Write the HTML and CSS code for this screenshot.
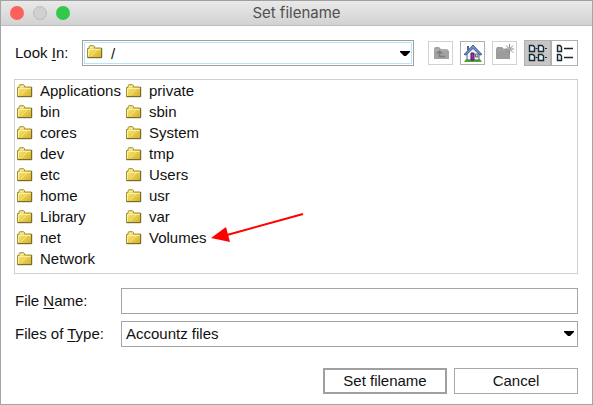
FILE: index.html
```html
<!DOCTYPE html>
<html lang="en">
<head>
<meta charset="utf-8">
<title>Set filename</title>
<link rel="stylesheet" href="styles.css">
</head>
<body>
<svg class="defs" aria-hidden="true">
  <defs>
    <linearGradient id="gold" x1="0" y1="0" x2="1" y2="1">
      <stop offset="0" stop-color="#f8ee98"/>
      <stop offset=".5" stop-color="#ecd050"/>
      <stop offset="1" stop-color="#d4ae2c"/>
    </linearGradient>
    <symbol id="folder" viewBox="0 0 16 14">
      <path d="M.5 12.500V3.500H2V1.500L3 .7H6.500L7.500 1.500V3H14.500V12.500Z" fill="url(#gold)" stroke="#a09034"/>
      <path d="M1.500 11.500V4.500H13.500" fill="none" stroke="#fbf0a0"/>
      <path d="M3 2.500H6.500" stroke="#f8ec98"/>
      <path d="M4 11L10 5" stroke="#fff4a0" stroke-opacity=".6"/>
      <path d="M.5 12.700H14.700V3" fill="none" stroke="#6f6528"/>
    </symbol>
  </defs>
</svg>
<main class="dialog">
  <header class="titlebar">
    <div class="lights">
      <button class="light close" aria-label="Close"></button>
      <button class="light minimize" aria-label="Minimize" disabled></button>
      <button class="light maximize" aria-label="Zoom"></button>
    </div>
    <h1 class="title">Set filename</h1>
  </header>
  <form class="content">
    <div class="look-row">
      <label class="look-label" for="look">Look <u>I</u>n:</label>
      <div class="combo look-combo">
        <select id="look"><option>/</option></select>
        <svg class="folder combo-folder" aria-hidden="true"><use href="#folder"/></svg>
        <svg class="caret" viewBox="0 0 10 5" aria-hidden="true"><path d="M0 0H10V1L6 5H4L0 1Z"/></svg>
      </div>
      <div class="tools">
        <button type="button" class="tool off" aria-label="Up one level" disabled>
          <svg viewBox="0 0 18 18"><path d="M2 15V5L3 3H7L9 5H15L17 7V15Z" fill="#a2a2a2"/><path d="M3 6H15" stroke="#b5b5b5"/><path d="M7.500 8V12.500H13M5 9.500L7.500 7L10 9.500" fill="none" stroke="#7c7c7c" stroke-width="1.500"/></svg>
        </button>
        <button type="button" class="tool" aria-label="Home">
          <svg viewBox="0 0 18 18"><path d="M0 18L2 15H16L18 18Z" fill="#57a91f"/><path d="M3 9L9 3L15 9V16H3Z" fill="#f4f2ff" stroke="#555a91"/><path d="M3 2H5V5L3 7Z" fill="#57627e"/><path d="M0 10.500L9 1L18 10.500L16 11L9 4.500L2 11Z" fill="#6b91c8" stroke="#354873" stroke-width=".8"/><path d="M7 16V9H10V16Z" fill="#a32ba6" stroke="#3c245c"/><path d="M11.500 10H14V13H11.500Z" fill="#fae35e" stroke="#5e6787"/></svg>
        </button>
        <button type="button" class="tool off" aria-label="New folder" disabled>
          <svg viewBox="0 0 18 18"><path d="M0 15V5L1 3H6L8 5H14V15Z" fill="#9c9c9c"/><path d="M1 6H12" stroke="#aaa"/><path d="M13.500 0V10M8.500 5H18M10 1.500L17 8.500M17 1.500L10 8.500" stroke="#858585"/><path d="M12 3.500H15V6.500H12Z" fill="#aaa"/></svg>
        </button>
        <div class="views">
          <button type="button" class="view on" aria-label="List" aria-pressed="true">
            <svg viewBox="0 0 20 18"><g fill="#d4f0fb" stroke="#20272b" stroke-width="1.400"><path d="M1.500 1.500H5L6.500 3V7.500H1.500Z"/><path d="M10.500 1.500H14L15.500 3V7.500H10.500Z"/><path d="M1.500 10.500H5L6.500 12V16.500H1.500Z"/><path d="M10.500 10.500H14L15.500 12V16.500H10.500Z"/></g><path d="M7.500 4.500H9.500M17 4.500H19M7.500 13.500H9.500M17 13.500H19" stroke="#20272b"/></svg>
          </button>
          <button type="button" class="view" aria-label="Details" aria-pressed="false">
            <svg viewBox="0 0 20 18"><g fill="#d4f0fb" stroke="#20272b" stroke-width="1.400"><path d="M2.500 1.500H5L6.500 3V7.500H2.500Z"/><path d="M2.500 10.500H5L6.500 12V16.500H2.500Z"/></g><path d="M9 4.500H18M9 13.500H18" stroke="#20272b" stroke-width="1.400"/></svg>
          </button>
        </div>
      </div>
    </div>

    <div class="browser">
      <ul class="files">
        <li><svg class="folder"><use href="#folder"/></svg>Applications</li>
        <li><svg class="folder"><use href="#folder"/></svg>bin</li>
        <li><svg class="folder"><use href="#folder"/></svg>cores</li>
        <li><svg class="folder"><use href="#folder"/></svg>dev</li>
        <li><svg class="folder"><use href="#folder"/></svg>etc</li>
        <li><svg class="folder"><use href="#folder"/></svg>home</li>
        <li><svg class="folder"><use href="#folder"/></svg>Library</li>
        <li><svg class="folder"><use href="#folder"/></svg>net</li>
        <li><svg class="folder"><use href="#folder"/></svg>Network</li>
        <li><svg class="folder"><use href="#folder"/></svg>private</li>
        <li><svg class="folder"><use href="#folder"/></svg>sbin</li>
        <li><svg class="folder"><use href="#folder"/></svg>System</li>
        <li><svg class="folder"><use href="#folder"/></svg>tmp</li>
        <li><svg class="folder"><use href="#folder"/></svg>Users</li>
        <li><svg class="folder"><use href="#folder"/></svg>usr</li>
        <li><svg class="folder"><use href="#folder"/></svg>var</li>
        <li><svg class="folder"><use href="#folder"/></svg>Volumes</li>
      </ul>
      <svg class="pointer" viewBox="0 0 94 32" aria-hidden="true"><path d="M92 2L16 23" stroke="#f00" stroke-width="2"/><path d="M0 26L15 15L19 30Z" fill="#f00"/></svg>
    </div>

    <div class="fields">
      <label for="name">File <u>N</u>ame:</label>
      <input class="text" id="name" type="text">
      <label for="type">Files of <u>T</u>ype:</label>
      <div class="combo">
        <select id="type"><option>Accountz files</option></select>
        <svg class="caret" viewBox="0 0 10 5" aria-hidden="true"><path d="M0 0H10V1L6 5H4L0 1Z"/></svg>
      </div>
    </div>

    <div class="actions">
      <button type="button" class="action default">Set filename</button>
      <button type="button" class="action">Cancel</button>
    </div>
  </form>
</main>
</body>
</html>
```
FILE: styles.css
```css
* { box-sizing: border-box; }
body {
  margin: 0;
  background: #fff;
  color: #111;
  font: 15px/21px "Liberation Sans", Arial, sans-serif;
}
button, input, select { font: inherit; color: inherit; margin: 0; border-radius: 0; }
svg { display: block; }
u { text-underline-offset: 2px; }
.defs { position: absolute; width: 0; height: 0; }

.dialog {
  min-height: 100vh;
  border: 1px solid #a5a5a5;
  border-top: 0;
}
.titlebar {
  display: grid;
  grid-template-columns: 1fr auto 1fr;
  align-items: center;
  height: 26px;
  padding: 0 9px;
  border-top: 1px solid #a0a0a0;
  border-bottom: 1px solid #bcbcbc;
  background: linear-gradient(#e9e9e9, #d2d2d2);
}
.lights { display: flex; gap: 9px; }
.light {
  width: 14px;
  height: 14px;
  padding: 0;
  border: 0;
  border-radius: 50%;
}
.close { background: #fc605c; }
.minimize { background: #d0d0d0; border: 1px solid #bcbcbc; }
.maximize { background: #34c84a; }
.title {
  margin: 0;
  color: #505050;
  font: 15px/24px Inter, "Liberation Sans", sans-serif;
}

.content { padding: 14px 14px 10px 13px; }
label { padding: 0 0 2px 1px; white-space: nowrap; }
.look-row { display: flex; align-items: center; }
.look-label { width: 68px; }

.combo { position: relative; height: 26px; }
.combo select {
  display: block;
  width: 100%;
  height: 100%;
  padding: 0 20px 2px 4px;
  border: 1px solid #a5a5a5;
  background: #fff;
  appearance: none;
}
.look-combo { flex: 1; border: 1px solid #a0a0a0; padding: 1px; }
.look-combo select { padding-left: 26px; border-color: #b5e5fb; }
.caret {
  position: absolute;
  top: 10px;
  right: 4px;
  width: 10px;
  height: 5px;
  pointer-events: none;
}
.look-combo .caret { right: 3px; }
.folder { flex: none; width: 16px; height: 14px; }
.combo-folder { position: absolute; left: 4px; top: 4px; pointer-events: none; }

.tools { display: flex; align-items: center; gap: 7px; margin-left: 14px; }
.tool, .view {
  display: grid;
  place-items: center;
  padding: 0;
  border: 1px solid #b0b0b0;
  background: #fff;
}
.tool { width: 25px; height: 24px; }
.tool svg { width: 18px; height: 18px; }
.tool.off { border-color: #d2d2d2; }
.views { display: flex; }
.view { width: 27px; height: 26px; }
.view svg { width: 20px; height: 18px; }
.view.on { background: #c6c6c6; }

.browser {
  position: relative;
  margin: 13px 0 14px;
  padding: 0 0 4px 2px;
  border: 1px solid #cfcfcf;
}
.files {
  display: grid;
  grid-template-rows: repeat(9, 21px);
  grid-auto-flow: column;
  grid-auto-columns: 109px;
  margin: 0;
  padding: 0;
  list-style: none;
}
.files li { display: flex; align-items: center; gap: 7px; white-space: nowrap; }
.pointer {
  position: absolute;
  left: 196px;
  top: 132px;
  width: 94px;
  height: 32px;
}

.fields {
  display: grid;
  grid-template-columns: 107px 1fr;
  align-items: center;
  row-gap: 7px;
}
.text {
  width: 100%;
  height: 26px;
  padding: 0 4px;
  border: 1px solid #a5a5a5;
  background: #fff;
}

.actions { display: flex; justify-content: flex-end; gap: 7px; margin-top: 21px; }
.action {
  width: 124px;
  height: 26px;
  padding: 0 0 2px;
  border: 1px solid #a8a8a8;
  background: #fff;
}
.default { border: 2px solid #a0a0a0; }
```
